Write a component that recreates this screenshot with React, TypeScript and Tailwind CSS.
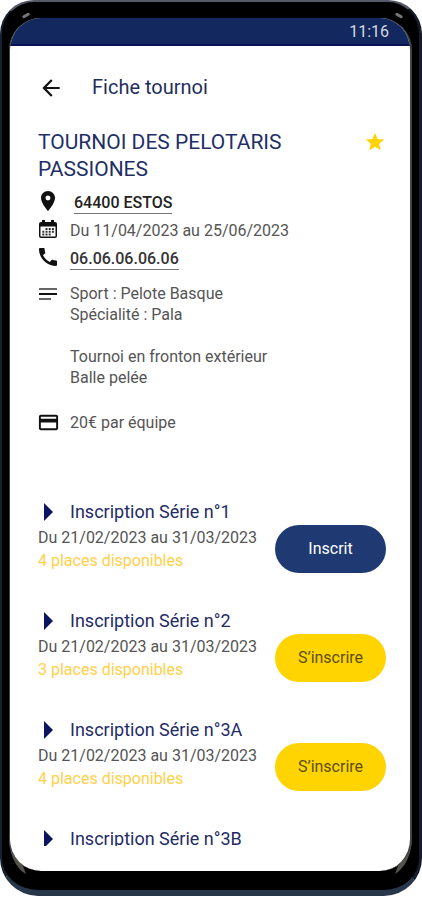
import type { ReactNode } from "react";
import {
  MdArrowBack,
  MdStar,
  MdPlace,
  MdCall,
  MdOutlineCreditCard,
} from "react-icons/md";

type Details = { dates: string; places: string; joined: boolean };
type Series = { name: string; details?: Details };

const series: Series[] = [
  {
    name: "Inscription Série n°1",
    details: { dates: "Du 21/02/2023 au 31/03/2023", places: "4 places disponibles", joined: true },
  },
  {
    name: "Inscription Série n°2",
    details: { dates: "Du 21/02/2023 au 31/03/2023", places: "3 places disponibles", joined: false },
  },
  {
    name: "Inscription Série n°3A",
    details: { dates: "Du 21/02/2023 au 31/03/2023", places: "4 places disponibles", joined: false },
  },
  { name: "Inscription Série n°3B" },
];

function CalendarIcon() {
  return (
    <svg viewBox="0 0 18 20" className="h-5 w-[18px] shrink-0" aria-hidden="true">
      <path
        fill="#111"
        fillRule="evenodd"
        d="M3 1h3v2h6V1h3v2h1a2 2 0 0 1 2 2v12a2 2 0 0 1-2 2H2a2 2 0 0 1-2-2V5a2 2 0 0 1 2-2h1zM1.500 7.500V17a.6.6 0 0 0 .6.6h13.800a.6.6 0 0 0 .6-.6V7.500z"
      />
      <path
        fill="#333"
        d="M6.500 9h2v2h-2zM9.700 9h2v2h-2zM12.900 9h2v2h-2zM3.300 11.800h2v2h-2zM6.500 11.800h2v2h-2zM9.700 11.800h2v2h-2zM12.900 11.800h2v2h-2zM3.300 14.600h2v2h-2zM6.500 14.600h2v2h-2zM9.700 14.600h2v2h-2z"
      />
    </svg>
  );
}

function NotesIcon() {
  return (
    <svg viewBox="0 0 18 12" className="h-3 w-[18px] shrink-0" aria-hidden="true">
      <path fill="#666" d="M0 0h18v2H0zM0 10h12v2H0z" />
      <path fill="#111" d="M0 5h18v2H0z" />
    </svg>
  );
}

function InfoRow({ icon, children }: { icon: ReactNode; children: ReactNode }) {
  return (
    <li className="flex h-7 gap-3">
      <span className="flex h-6 w-5 shrink-0 items-center justify-center text-[#111]">{icon}</span>
      <div className="pt-1">{children}</div>
    </li>
  );
}

function NoteRow({ icon, children }: { icon: ReactNode; children: ReactNode }) {
  return (
    <li className="flex gap-3">
      <span className="flex h-[21px] w-5 shrink-0 items-center justify-center text-[#111]">{icon}</span>
      <div className="leading-[21px]">{children}</div>
    </li>
  );
}

function SeriesItem({ item }: { item: Series }) {
  const { name, details } = item;
  return (
    <li className={details ? "flex h-[109px] shrink-0 items-start justify-between" : "flex shrink-0"}>
      <div>
        <h2 className="flex h-6 items-center gap-4 text-lg leading-6 text-[#1f2c66]">
          <svg viewBox="0 0 16 18" className="h-[18px] w-4" aria-hidden="true">
            <path fill="#0b1560" d="M6 0l9 9-9 9z" />
          </svg>
          {name}
        </h2>
        {details && (
          <>
            <p className="pt-0.5 leading-6">{details.dates}</p>
            <p className="leading-[22px] text-[#ffd04a]">{details.places}</p>
          </>
        )}
      </div>
      {details && (
        <button
          type="button"
          className={
            details.joined
              ? "mt-[25px] h-12 w-[111px] rounded-full bg-[#1f3a72] text-white"
              : "mt-[25px] h-12 w-[111px] rounded-full bg-[#ffd400] text-[#5c4d12]"
          }
        >
          {details.joined ? "Inscrit" : "S’inscrire"}
        </button>
      )}
    </li>
  );
}

export default function App() {
  return (
    <div className="h-screen bg-white pb-1 font-['Roboto',sans-serif] text-base text-[#555]">
      <div className="relative h-full overflow-hidden rounded-t-[34px] rounded-b-[38px] border-t-2 border-r-3 border-b-6 border-l-2 border-t-[#555866] border-r-[#171c2c] border-b-[#28364a] border-l-[#142130] bg-black px-[7px] pt-4 pb-[19px]">
        <span className="absolute top-3 left-5 h-[3px] w-2 -rotate-30 rounded-full bg-[#777]" />
        <span className="absolute top-3 right-4 h-[3px] w-2 rotate-30 rounded-full bg-[#777]" />
        <svg viewBox="0 0 24 46" className="absolute bottom-3 left-1 h-[46px] w-6" aria-hidden="true">
          <path fill="#55534e" d="M3 0c1 18 8 26 14 34l3 8C10 36 2 22 3 0z" />
        </svg>
        <svg viewBox="0 0 24 46" className="absolute right-1 bottom-3 h-[46px] w-6" aria-hidden="true">
          <path fill="#55534e" d="M21 0c-1 18-8 26-14 34L4 42C14 36 22 22 21 0z" />
        </svg>
        <main className="relative flex h-full flex-col overflow-hidden rounded-[32px] border-r-2 border-l border-r-[#444] border-l-[#4a463c] bg-white">
          <div className="flex h-7 shrink-0 items-end justify-end border-b-2 border-[#0b1156] bg-[#13285e] pr-[21px] text-[#d2d8df]">
            <time className="pb-px leading-[22px]">11:16</time>
          </div>

          <div className="flex min-h-0 flex-1 flex-col pr-6 pb-[25px] pl-7">
            <header className="flex shrink-0 items-center gap-7 pt-7">
              <button type="button" aria-label="Retour" className="text-[#111]">
                <MdArrowBack size={26} />
              </button>
              <h1 className="text-xl leading-[27px] text-[#1f2f5c]">Fiche tournoi</h1>
            </header>

            <div className="flex shrink-0 items-start justify-between pt-7">
              <h2 className="w-[270px] text-[21px] leading-[27px] text-[#1f2f66]">
                TOURNOI DES PELOTARIS PASSIONES
              </h2>
              <button type="button" aria-label="Favori" className="pt-0.5 text-[#ffd400]">
                <MdStar size={22} />
              </button>
            </div>

            <ul className="shrink-0 pt-1.5">
              <InfoRow icon={<MdPlace size={24} className="shrink-0" />}>
                <a href="#lieu" className="ml-1 block border-b border-[#777] leading-5 font-medium text-[#222]">
                  64400 ESTOS
                </a>
              </InfoRow>
              <InfoRow icon={<CalendarIcon />}>
                <p className="leading-5">Du 11/04/2023 au 25/06/2023</p>
              </InfoRow>
              <InfoRow icon={<MdCall size={24} className="shrink-0" />}>
                <a href="tel:0606060606" className="block border-b border-[#777] leading-5 font-medium text-[#333]">
                  06.06.06.06.06
                </a>
              </InfoRow>
            </ul>

            <ul className="flex shrink-0 flex-col gap-6 pt-2.5">
              <NoteRow icon={<NotesIcon />}>
                <p>
                  Sport : Pelote Basque
                  <br />
                  Spécialité : Pala
                  <br />
                  <br />
                  Tournoi en fronton extérieur
                  <br />
                  Balle pelée
                </p>
              </NoteRow>
              <NoteRow icon={<MdOutlineCreditCard size={23} className="shrink-0" />}>
                <p>20€ par équipe</p>
              </NoteRow>
            </ul>

            <ul className="mt-[67px] flex min-h-0 flex-1 flex-col overflow-hidden">
              {series.map((item) => (
                <SeriesItem key={item.name} item={item} />
              ))}
            </ul>
          </div>
        </main>
      </div>
    </div>
  );
}
